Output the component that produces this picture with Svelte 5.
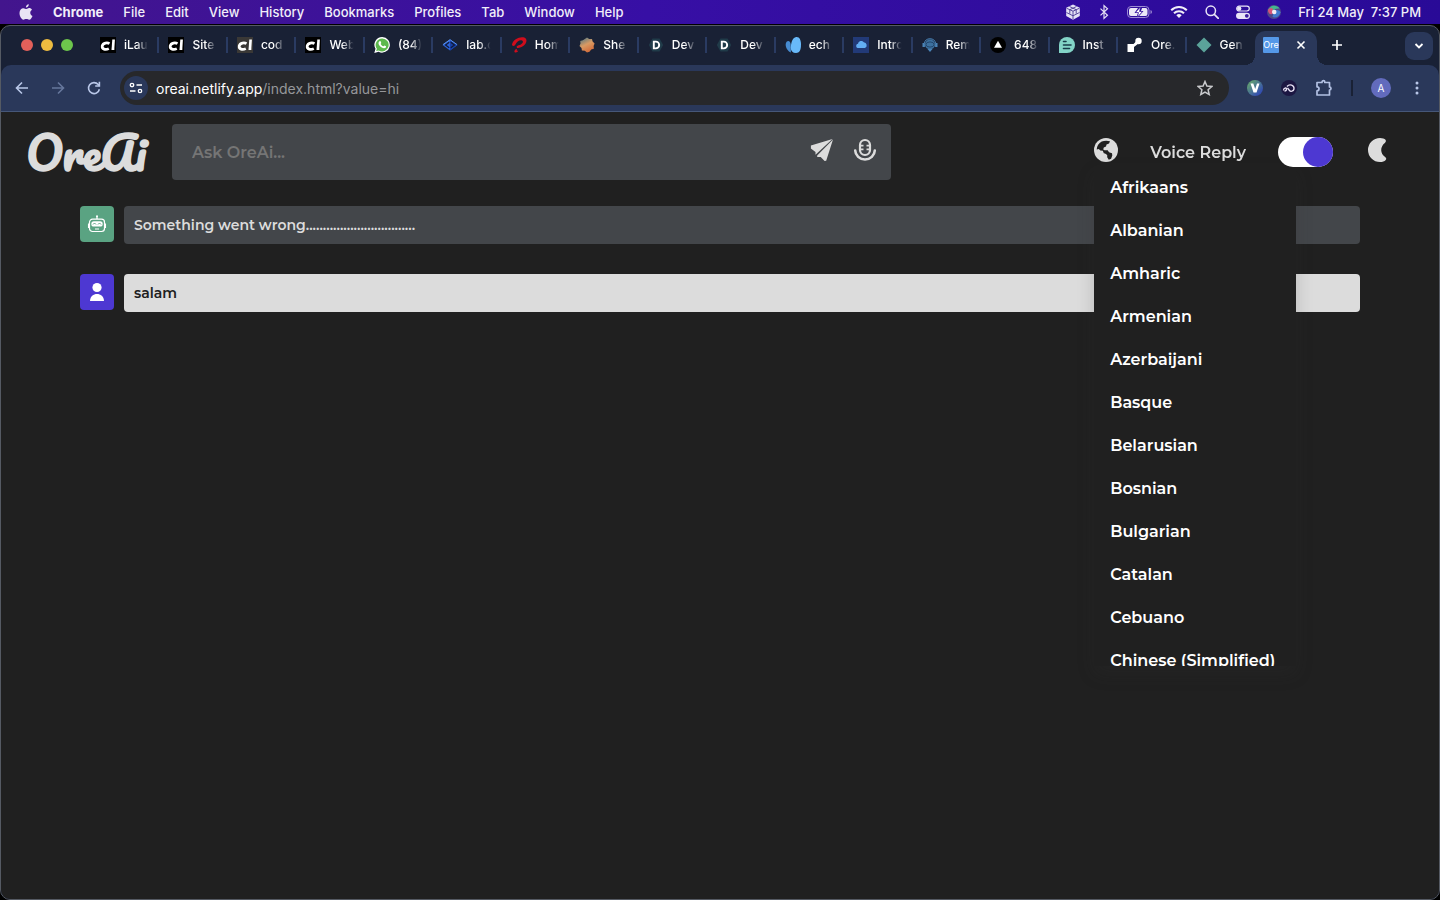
<script>
  const menus = ['File', 'Edit', 'View', 'History', 'Bookmarks', 'Profiles', 'Tab', 'Window', 'Help'];

  const tabs = [
    { icon: 'cl', title: 'iLau' },
    { icon: 'cl', title: 'Site' },
    { icon: 'cl-dim', title: 'cod' },
    { icon: 'cl', title: 'Web' },
    { icon: 'whatsapp', title: '(84)' },
    { icon: 'lab', title: 'lab.c' },
    { icon: 'airtel', title: 'Hom' },
    { icon: 'badge', title: 'She' },
    { icon: 'devfolio', title: 'Dev' },
    { icon: 'devfolio', title: 'Dev' },
    { icon: 'echo', title: 'ech' },
    { icon: 'cloud', title: 'Intro' },
    { icon: 'remote', title: 'Rem' },
    { icon: 'triangle', title: '648' },
    { icon: 'chat', title: 'Inst' },
    { icon: 'node', title: 'Ore.' },
    { icon: 'diamond', title: 'Gen' },
  ];

  const languages = [
    'Afrikaans', 'Albanian', 'Amharic', 'Armenian', 'Azerbaijani', 'Basque', 'Belarusian',
    'Bosnian', 'Bulgarian', 'Catalan', 'Cebuano', 'Chinese (Simplified)', 'Chinese (Traditional)',
    'Corsican', 'Croatian', 'Czech', 'Danish', 'Dutch', 'English',
  ];

  const messages = [
    { from: 'bot', text: 'Something went wrong................................' },
    { from: 'user', text: 'salam' },
  ];

  let prompt = $state('');
  let voiceReply = $state(true);
  let showLanguages = $state(true);
  let language = $state('English');

  function pickLanguage(name) {
    language = name;
    showLanguages = false;
  }
</script>

{#snippet favicon(name)}
  <svg class="favicon" viewBox="0 0 16 16" aria-hidden="true">
    {#if name === 'cl' || name === 'cl-dim'}
      <rect width="16" height="16" fill={name === 'cl' ? '#000' : '#3a3836'} />
      <path d="M9.500 6.600C7.500 5.400 3 5.600 2.200 8.900 1.700 12.300 5.500 13.200 8.800 11.600" fill="none" stroke="#fff" stroke-width="2.700" />
      <path d="M12.300 2.600h2.600L14.300 13h-2.800z" fill="#fff" />
    {:else if name === 'whatsapp'}
      <path d="M8.2 0a7.8 7.8 0 1 1-3.6 14.8L.3 16l1.2-4.2A7.8 7.8 0 0 1 8.2 0z" fill="#fff" />
      <path d="M8.2 1.4a6.5 6.5 0 1 1-3.5 12l-2.5.7.7-2.4A6.5 6.5 0 0 1 8.2 1.4z" fill="#5cb84c" />
      <path d="M5.6 4.3c.7-.5 1.1-.1 1.6 1.4.2.6-.6.8-.5 1.2.6 1.3 1.5 2 2.6 2.4.5 0 .7-1 1.2-.9l1.5.8c.5 1-.8 2-1.9 2C7 11 4.5 8.200 4.5 6.3c0-.8.5-1.6 1.1-2z" fill="#fff" />
    {:else if name === 'lab'}
      <path d="M8 2.500 15.500 8 8 13.500.5 8z" fill="#2c62d8" />
      <path d="M8 2.500v11L15.500 8z" fill="#173fa5" />
      <path d="M7.200 5.200 3.600 8l3.600 2.800M8.800 5.200 12.400 8l-3.600 2.800" fill="none" stroke="#101b38" stroke-width="1.3" />
      <path d="M1 7.600 8 2.700l7 4.900" fill="none" stroke="#5b94ee" />
    {:else if name === 'airtel'}
      <path d="M1 7.500C2 2.500 8-.5 12.500.3c4.500 1 3.800 6.500-1.500 9.500-2.800 1.500-5.200 1.300-5.400.2-.1-1.200 1.600-1.500 3-2 2.600-1 4.600-3.600 2.400-4.500C8.500 2.700 6 4.500 4 8.200 2.500 9.500 1 9 1 7.500z" fill="#cf0d1c" />
      <path d="M6.500 11.800c-1.500 1-.8 2.600 1 1.800-.8 1.800-3.200 2.700-4 1.300-.6-1.400 1.200-3 3-3.100z" fill="#cf0d1c" />
    {:else if name === 'badge'}
      <defs>
        <linearGradient id="badge" x1="0" y1="0" x2=".5" y2="1">
          <stop offset="0" stop-color="#3e7287" />
          <stop offset=".55" stop-color="#d89a63" />
          <stop offset="1" stop-color="#d36e3c" />
        </linearGradient>
      </defs>
      <path d="m8 .5 2.200 1.600L13 2l.6 2.600L15.600 6.600l-1 2.400.3 2.700-2.700.7L10.500 14.700 8 15.500l-2.200-1.800-2.900-.1-.4-2.700L.5 9l1-2.400-.3-2.700 2.700-.6z" fill="url(#badge)" />
    {:else if name === 'devfolio'}
      <path d="M4.500 1.500h7L15.200 8l-3.700 6.500h-7L.8 8z" fill="#203b49" />
      <path d="M5.800 4.600h2a3.400 3.400 0 0 1 0 6.800h-2z" fill="none" stroke="#fff" stroke-width="1.900" />
    {:else if name === 'echo'}
      <path d="M1.800 4.500c2-1.500 4 .4 3.900 3.500l.2 7.500C1.500 13.500-.9 7.500 1.800 4.500z" fill="#468bd1" />
      <path d="M10.500.2c4-.9 5.500 3 5.500 7.300 0 5.700-1.600 8.500-5 8.500-3.500 0-5.300-2-5.200-5.500C6 6 7.300 1 10.500.2z" fill="#68b9fa" />
    {:else if name === 'cloud'}
      <rect width="16" height="16" fill="#223a78" />
      <path d="M4.500 11A2.200 2.200 0 0 1 5 6.800a3.200 3.200 0 0 1 5.800-1.500 3 3 0 0 1 1.200 5.700z" fill="#62aef4" />
    {:else if name === 'remote'}
      <circle cx="8" cy="7.5" r="5" fill="#3d719f" />
      <path d="M2.300 10V6.500a5.800 5.800 0 0 1 11.400 0V10" fill="none" stroke="#4a84b8" />
      <path d="M.5 6h2v4h-2zM13.500 6h2v4h-2zM5.500 12h5L8 15z" fill="#4a84b8" />
      <ellipse cx="8" cy="7.5" rx="4" ry="2.6" fill="none" stroke="#22466d" />
    {:else if name === 'triangle'}
      <circle cx="8" cy="8" r="8" fill="#000" />
      <path d="m8 3.800 4 7H4z" fill="#fff" />
    {:else if name === 'chat'}
      <path d="M8 0a8 8 0 0 1 0 16H0V8a8 8 0 0 1 8-8z" fill="#83d4c7" />
      <path d="M4.500 4.500h2.500M4.500 8h7.500M4.500 11.500h6" stroke="#183b4a" stroke-width="1.600" stroke-linecap="round" />
    {:else if name === 'node'}
      <path d="M.5 7h6l3-3 2.200 2.200L7 10v5H.5z" fill="#fff" />
      <circle cx="11.5" cy="4" r="3.2" fill="#fff" />
    {:else if name === 'diamond'}
      <path d="m8 .5 7.500 7.500L8 15.500.5 8z" fill="#5ba39a" />
    {/if}
  </svg>
{/snippet}

<div class="desktop">
  <!-- System menu bar -->
  <header class="menubar">
    <nav class="menus" aria-label="Menu bar">
      <button class="apple" aria-label="Apple menu">
        <svg width="14" height="16" viewBox="0 0 14 16"><path d="M9.800.2c.1 1.700-1.200 3.300-2.900 3.300C6.700 1.900 8.200.4 9.800.2zM10 4.100c1.300 0 2.400.7 3 1.600-2.600 1.500-2.100 5.200.5 6.200-.7 1.800-1.800 3.800-3.300 3.800-1.100 0-1.500-.7-2.900-.7s-1.900.7-2.900.7C2.600 15.700.5 12.300.5 9.100c0-3.100 1.900-4.900 3.900-4.900 1.300 0 2.100.8 3.100.8.8 0 1.500-.9 2.500-.9z" /></svg>
      </button>
      <button class="app-name">Chrome</button>
      {#each menus as menu}
        <button>{menu}</button>
      {/each}
    </nav>
    <div class="status">
      <svg width="16" height="16" viewBox="0 0 16 16"><path d="m8 .5 6.800 3.300v8.300L8 15.700l-6.800-3.600V3.800z" fill="#e4e2f6" /><path d="m1.500 4.200 6.500 3 6.500-3M8 7.200v8M4.500 2.500l6.700 3.200v4M11.500 2.500 4.800 5.700v4M1.500 8.500l6.500 3.300 6.500-3.300" fill="none" stroke="#4a3b94" stroke-width=".9" /></svg>
      <svg width="12" height="16" viewBox="0 0 12 16"><path d="m2.500 4.600 7 6.700L6 14.500v-13l3.500 3.200-7 6.700" fill="none" stroke="#e4e0f4" stroke-width="1.200" /></svg>
      <svg width="26" height="14" viewBox="0 0 26 14"><rect x=".5" y="1.5" width="21.5" height="11" rx="3.500" fill="none" stroke="#9b8ad2" /><path d="M4 3h7L7.500 8H11l-1 3H4a2 2 0 0 1-2-2V5a2 2 0 0 1 2-2zM15 3h3.500a2 2 0 0 1 2 2v4a2 2 0 0 1-2 2H12l4.500-5H14z" fill="#ece9f7" /><path d="m13.500 2-5 5.500h3l-1 4.500 5-5.500h-3z" fill="#fff" stroke="#3a1b9e" stroke-width=".6" /><path d="M23.500 5v4c2-.8 2-3.200 0-4z" fill="#9b8ad2" /></svg>
      <svg width="18" height="14" viewBox="0 0 18 14"><path d="M1.200 5.300a11 11 0 0 1 15.600 0M4 8.200a7.100 7.100 0 0 1 10 0" fill="none" stroke="#f1eff9" stroke-width="2" /><path d="M6.300 10.300a4 4 0 0 1 5.400 0L9 13z" fill="#f1eff9" /></svg>
      <svg width="14" height="14" viewBox="0 0 14 14"><circle cx="5.800" cy="5.800" r="4.700" fill="none" stroke="#e9e5f7" stroke-width="1.500" /><path d="m9.300 9.300 4 4" stroke="#e9e5f7" stroke-width="1.700" stroke-linecap="round" /></svg>
      <svg width="14" height="14" viewBox="0 0 14 14"><rect x=".7" y="1.200" width="12.600" height="4.800" rx="2.400" fill="none" stroke="#e9e5f7" stroke-width="1.200" /><circle cx="3.200" cy="3.600" r="2.200" fill="#e9e5f7" /><rect y="7.700" width="14" height="6.200" rx="3.100" fill="#e9e5f7" /><circle cx="10.800" cy="10.800" r="1.900" fill="#3a1b9e" /></svg>
      <svg width="14" height="14" viewBox="0 0 14 14"><circle cx="7" cy="7" r="7" fill="#4e4789" /><path d="M1 5C3 0 10-.5 12.500 3.500 9 3 6 5 5 7z" fill="#43b58f" /><path d="M1 5c1-2 4-3 5-1L5 9c-2 1-4-1-4-4z" fill="#d65279" /><path d="M7 6c2-2 6-1 6.500 1.500-1 4-5 6-8 4.500z" fill="#3f78cf" /><circle cx="7.200" cy="7" r="2.300" fill="#f4e9f3" /></svg>
      <time class="clock">Fri 24 May&nbsp; 7:37 PM</time>
    </div>
  </header>

  <div class="window">
    <!-- Tab strip -->
    <div class="tabstrip">
      <div class="lights">
        <button class="light close" aria-label="Close window"></button>
        <button class="light minimise" aria-label="Minimise window"></button>
        <button class="light zoom" aria-label="Zoom window"></button>
      </div>
      <div class="tabs">
        {#each tabs as tab, i}
          <button class="tab" class:last={i === tabs.length - 1}>
            {@render favicon(tab.icon)}
            <span class="tab-title">{tab.title}</span>
          </button>
        {/each}
      </div>
      <div class="active-tab">
        <span class="ore-icon">Ore</span>
        <button class="tab-close" aria-label="Close tab">
          <svg width="10" height="10" viewBox="0 0 10 10"><path d="m1.500 1.500 7 7m0-7-7 7" stroke="#fff" stroke-width="1.600" /></svg>
        </button>
      </div>
      <button class="new-tab" aria-label="New tab">
        <svg width="12" height="12" viewBox="0 0 12 12"><path d="M6 1v10M1 6h10" stroke="#fff" stroke-width="1.700" /></svg>
      </button>
      <button class="tab-search" aria-label="Search tabs">
        <svg width="10" height="8" viewBox="0 0 10 8"><path d="m1.500 2 3.500 3.500L8.500 2" fill="none" stroke="#fff" stroke-width="1.800" /></svg>
      </button>
    </div>

    <!-- Address bar -->
    <div class="toolbar">
      <button aria-label="Back"><svg width="16" height="16" viewBox="0 0 16 16"><path d="M14 8H3M8 2.500 2.500 8 8 13.500" fill="none" stroke="#b9c7e8" stroke-width="1.600" /></svg></button>
      <button aria-label="Forward"><svg width="16" height="16" viewBox="0 0 16 16"><path d="M2 8h11M8 2.500 13.500 8 8 13.500" fill="none" stroke="#66779c" stroke-width="1.600" /></svg></button>
      <button aria-label="Reload"><svg width="16" height="16" viewBox="0 0 16 16"><path d="M13.400 9.300A5.500 5.500 0 1 1 12.200 4.500L13.500 6" fill="none" stroke="#b9c7e8" stroke-width="1.600" /><path d="M14.200 1.800v5h-5V5.200h3.400V1.800z" fill="#b9c7e8" /></svg></button>
      <div class="omnibox">
        <button class="site-info" aria-label="View site information">
          <svg width="14" height="12" viewBox="0 0 14 12"><path d="M7.500 3H13M1 9h5.500" stroke="#fff" stroke-width="1.500" /><circle cx="3" cy="3" r="1.700" fill="none" stroke="#fff" stroke-width="1.300" /><circle cx="11" cy="9" r="1.700" fill="none" stroke="#fff" stroke-width="1.300" /></svg>
        </button>
        <div class="url" role="textbox" tabindex="0" aria-label="Address">oreai.netlify.app<span>/index.html?value=hi</span></div>
        <button aria-label="Bookmark this tab"><svg width="16" height="16" viewBox="0 0 16 16"><path d="m8 1.500 1.900 4.600 4.900.4-3.700 3.200 1.100 4.800L8 12l-4.200 2.500 1.100-4.800L1.200 6.500l4.900-.4z" fill="none" stroke="#c8c9cc" stroke-width="1.500" /></svg></button>
      </div>
      <div class="extensions">
        <button aria-label="Vimium"><svg width="16" height="16" viewBox="0 0 16 16"><defs><linearGradient id="vee" x2="1" y2="1"><stop offset=".2" stop-color="#5f9a76" /><stop offset=".8" stop-color="#344fb0" /></linearGradient></defs><circle cx="8" cy="8" r="8" fill="url(#vee)" /><path d="M3.500 3.500h2.800L8.200 9l1.800-5.500h2.500L9.500 12.500h-3z" fill="#fff" /></svg></button>
        <button aria-label="Assistant"><svg width="16" height="16" viewBox="0 0 16 16"><circle cx="8" cy="8" r="8" fill="#1c1742" /><path d="M2.500 10.500C2.500 7.500 5.500 7.500 5.500 9S4 11 3.500 11M6 6.500C8.500 3.500 13.500 5 13 9c-.5 2.500-3.500 2.800-4.500 1.500L6.500 8" fill="none" stroke="#e8e2f5" stroke-width="1.300" /></svg></button>
        <button aria-label="Extensions"><svg width="18" height="18" viewBox="0 0 18 18"><path d="M2 3.500h5V3a1.400 1.400 0 0 1 2.800 0v.5h4.700V8a1.500 1.500 0 0 1 0 3v5H2v-4.200a2 2 0 0 0 0-4z" fill="none" stroke="#b3c1e3" stroke-width="1.700" stroke-linejoin="round" /></svg></button>
        <span class="divider"></span>
        <button class="avatar" aria-label="Profile">A</button>
        <button aria-label="Chrome menu"><svg width="16" height="16" viewBox="0 0 16 16" fill="#b9c7e8"><circle cx="8" cy="3" r="1.500" /><circle cx="8" cy="8" r="1.500" /><circle cx="8" cy="13" r="1.500" /></svg></button>
      </div>
    </div>

    <!-- OreAi page -->
    <div class="page">
      <header class="page-header">
        <a class="logo" href="/">OreAi</a>
        <form class="ask" onsubmit={(e) => e.preventDefault()}>
          <input type="text" aria-label="Ask OreAi" placeholder="Ask OreAi..." bind:value={prompt} />
          <button type="submit" aria-label="Send">
            <svg width="24" height="24" viewBox="0 0 24 24" fill="#dcdcdc"><path d="M22.500 1 .9 7.500v3L5.500 14v2.800zM23 1.500 7.200 17.500v1.400h3.500l3.900 4.100 1.600-.2z" /></svg>
          </button>
          <button type="button" aria-label="Speak">
            <svg width="24" height="24" viewBox="0 0 24 24" fill="none" stroke="#dcdcdc"><rect x="7" y="2" width="10" height="15" rx="5" stroke-width="2.200" /><path d="M2.200 12.500c.2 5 4.500 9 9.800 9s9.600-4 9.800-9" stroke-width="2.600" stroke-linecap="round" /><path d="M7 7.700h3.500M13.500 7.700H17M7 11.300h3.500M13.500 11.300H17" stroke-width="1.800" /></svg>
          </button>
        </form>

        <div class="controls">
          <div class="languages">
            <button class="globe" aria-label="Language" aria-expanded={showLanguages} onclick={() => (showLanguages = !showLanguages)}>
              <svg width="24" height="24" viewBox="0 0 24 24"><circle cx="12" cy="12" r="12" fill="#dcdcdc" /><path d="M2.700 11.500c.2-3.500 2-6.500 5-8 2.500-1 5.500-1.100 8.300-.3L15 5.500 12.500 6.500 12 8.500 9.800 9.500l-.6 2 1.300.8h3.200l1.300 2 3 1 .3 2.200-1.200 3.300-2.300 1-1.600-2.500V17l-2.200-1.500-1.200-.2-1-2.600-2.500-.2-1.500-1.500z" fill="#202020" /></svg>
            </button>
            {#if showLanguages}
              <ul class="language-list">
                {#each languages as name}
                  <li><button aria-current={name === language} onclick={() => pickLanguage(name)}>{name}</button></li>
                {/each}
              </ul>
            {/if}
          </div>
          <label class="voice">
            <span>Voice Reply</span>
            <input type="checkbox" bind:checked={voiceReply} />
          </label>
          <button class="theme" aria-label="Toggle theme">
            <svg width="19" height="24" viewBox="0 0 19 24"><path d="M12 0c2.500 0 4.500.8 5.500 1.700.9 1.200.2 2.300-.7 3.200-5 4-4.600 10.500.3 14 1.300.8 1.500 2 .6 3C16.500 23.300 14.500 24 12 24a12 12 0 0 1 0-24z" fill="#dcdcdc" /></svg>
          </button>
        </div>
      </header>

      <main class="messages">
        {#each messages as message}
          <div class="message {message.from}">
            <span class="sender">
              {#if message.from === 'bot'}
                <svg width="20" height="20" viewBox="0 0 20 20" fill="none" stroke="#fff"><path d="M10 5V2" stroke-width="1.300" /><circle cx="10" cy="2.200" r="1" fill="#fff" stroke="none" /><path d="M5.500 5.200h9a3 3 0 0 1 3 3v6.300a3 3 0 0 1-3 3h-9a3 3 0 0 1-3-3V8.200a3 3 0 0 1 3-3z" stroke-width="1.200" /><path d="M1.600 9.500v4.500M18.400 9.500v4.500" stroke-width="1.300" /><rect x="4.300" y="7.300" width="11.400" height="5.300" rx="2.600" fill="#fff" stroke="none" /><path d="m6 10.500 1.500-1.500L9 10.500m2 0L12.500 9l1.500 1.500" stroke="#5aa382" /><path d="M8 15h4" stroke-width="1.200" /></svg>
              {:else}
                <svg width="20" height="20" viewBox="0 0 20 20" fill="#fff"><circle cx="10" cy="5.500" r="4.600" /><path d="M3 19c0-9.500 14-9.500 14 0z" /></svg>
              {/if}
            </span>
            <p class="bubble">{message.text}</p>
          </div>
        {/each}
      </main>
    </div>
  </div>
</div>

<style>
  :global(body) {
    margin: 0;
    background: #000;
  }

  .desktop {
    display: flex;
    flex-direction: column;
    min-height: 100vh;
    font-family: Inter, 'Liberation Sans', sans-serif;
    color: #fff;
  }
  button {
    display: flex;
    align-items: center;
    justify-content: center;
    padding: 0;
    border: none;
    background: none;
    color: inherit;
    font: inherit;
    cursor: pointer;
  }
  svg {
    display: block;
    flex-shrink: 0;
  }

  /* === Menu bar === */
  .menubar {
    display: flex;
    align-items: center;
    justify-content: space-between;
    height: 24px;
    margin-bottom: 1px;
    padding: 0 19px;
    background: linear-gradient(90deg, #43158d, #370fa5 45%, #290a97);
    font-size: 13px;
    font-weight: 500;
    color: #f1eef9;
  }
  .menus,
  .status {
    display: flex;
    align-items: center;
  }
  .menus {
    gap: 20px;
  }
  .status {
    gap: 17px;
  }
  .apple {
    fill: #e9e4f4;
  }
  .app-name {
    font-weight: 700;
  }

  /* === Browser window === */
  .window {
    flex: 1;
    display: flex;
    flex-direction: column;
    border: 1px solid #555a63;
    border-radius: 10px;
    background: #192135;
    overflow: hidden;
  }
  .tabstrip {
    display: flex;
    align-items: center;
    height: 39px;
    padding-right: 6px;
  }
  .lights {
    display: flex;
    gap: 8px;
    padding: 0 18px 2px 20px;
  }
  .light {
    width: 12px;
    height: 12px;
    border-radius: 50%;
  }
  .close {
    background: #e2605a;
  }
  .minimise {
    background: #edbb40;
  }
  .zoom {
    background: #6dc54c;
  }
  .tabs {
    flex: 1;
    display: flex;
    min-width: 0;
  }
  .tab {
    flex: 1;
    position: relative;
    justify-content: flex-start;
    gap: 8px;
    min-width: 0;
    padding: 0 10px 2px 9px;
    font-size: 12px;
    font-weight: 500;
  }
  .tab::after {
    content: '';
    position: absolute;
    right: 0;
    width: 2px;
    height: 16px;
    background: #2a3b62;
  }
  .tab.last::after {
    display: none;
  }
  .favicon {
    width: 16px;
    height: 16px;
  }
  .tab-title {
    flex: 1;
    overflow: hidden;
    white-space: nowrap;
    text-align: left;
    mask-image: linear-gradient(90deg, #000 50%, transparent 95%);
  }
  .active-tab {
    position: relative;
    align-self: flex-end;
    display: flex;
    align-items: center;
    justify-content: space-between;
    box-sizing: border-box;
    width: 62px;
    height: 34px;
    padding: 0 11px 6px 8px;
    border-radius: 10px 10px 0 0;
    background: #2a385a;
  }
  .active-tab::before,
  .active-tab::after {
    content: '';
    position: absolute;
    bottom: 0;
    width: 10px;
    height: 10px;
  }
  .active-tab::before {
    right: 100%;
    background: radial-gradient(circle at 0 0, transparent 10px, #2a385a 10px);
  }
  .active-tab::after {
    left: 100%;
    background: radial-gradient(circle at 100% 0, transparent 10px, #2a385a 10px);
  }
  .ore-icon {
    display: flex;
    justify-content: center;
    width: 16px;
    overflow: hidden;
    border-radius: 1px;
    background: #5598e8;
    font-size: 9px;
    line-height: 16px;
  }
  .new-tab {
    width: 40px;
    padding-bottom: 2px;
  }
  .tab-search {
    width: 28px;
    height: 28px;
    margin-left: 48px;
    border-radius: 9px;
    background: #2a385a;
  }

  .toolbar {
    display: flex;
    align-items: center;
    gap: 20px;
    height: 46px;
    padding: 0 14px 0 13px;
    border-bottom: 1px solid #465778;
    border-radius: 10px 10px 0 0;
    background: #2a385a;
  }
  .omnibox {
    flex: 1;
    display: flex;
    align-items: center;
    gap: 8px;
    height: 34px;
    margin: 0 -2px;
    padding: 0 16px 0 4px;
    border-radius: 17px;
    background: #27282b;
  }
  .site-info {
    width: 24px;
    height: 24px;
    border-radius: 50%;
    background: #2a385a;
  }
  .url {
    flex: 1;
    outline: none;
    font-size: 14px;
  }
  .url span {
    color: #96979a;
  }
  .extensions {
    display: flex;
    align-items: center;
    gap: 18px;
  }
  .divider {
    width: 2px;
    height: 16px;
    background: #192135;
  }
  .avatar {
    width: 20px;
    height: 20px;
    border-radius: 50%;
    background: #626bbd;
    font-size: 10px;
  }

  /* === Page === */
  .page {
    flex: 1;
    background: #202020;
    color: #dcdcdc;
    font-family: Montserrat, Inter, sans-serif;
  }
  .page-header {
    display: flex;
    align-items: center;
    padding: 12px 52px 12px 25px;
  }
  .logo {
    width: 146px;
    font-family: Pacifico, Lato, sans-serif;
    font-size: 45px;
    font-weight: 700;
    line-height: 56px;
    color: #dcdcdc;
    text-decoration: none;
  }
  .ask {
    display: flex;
    align-items: center;
    gap: 19px;
    box-sizing: border-box;
    width: calc(50vw - 1px);
    height: 56px;
    padding: 0 14px 0 20px;
    border-radius: 4px;
    background: #43464a;
  }
  .ask input {
    flex: 1;
    min-width: 0;
    padding: 0;
    border: none;
    outline: none;
    background: none;
    color: #dcdcdc;
    font: inherit;
    font-size: 16px;
    font-weight: 600;
  }
  .ask input::placeholder {
    color: #757575;
  }
  .ask button {
    padding-bottom: 4px;
  }
  .controls {
    display: flex;
    align-items: center;
    margin-left: auto;
  }
  .languages {
    position: relative;
    margin-right: 32px;
  }
  .globe,
  .theme {
    padding-bottom: 4px;
  }
  .language-list {
    position: absolute;
    z-index: 1;
    top: 28px;
    left: 0;
    width: 202px;
    max-height: 500px;
    margin: 0;
    padding: 0;
    overflow: auto;
    scrollbar-width: none;
    list-style: none;
    background: #202020;
    box-shadow: 0 8px 16px rgba(50, 50, 50, 0.2);
  }
  .language-list button {
    justify-content: flex-start;
    width: 100%;
    height: 43px;
    padding: 0 16px;
    color: #fff;
    font-size: 16px;
    font-weight: 600;
  }
  .voice {
    position: relative;
    z-index: 2;
    display: flex;
    align-items: center;
    gap: 32px;
    font-size: 16px;
    font-weight: 600;
  }
  .voice input {
    appearance: none;
    display: flex;
    width: 55px;
    height: 30px;
    margin: 0;
    border-radius: 15px;
    background: #fff;
  }
  .voice input::before {
    content: '';
    width: 30px;
    height: 30px;
    border-radius: 50%;
    background: #4d38d2;
  }
  .voice input:checked {
    justify-content: flex-end;
  }
  .theme {
    margin-left: 35px;
  }

  .messages {
    display: flex;
    flex-direction: column;
    gap: 30px;
    padding: 14px 79px;
  }
  .message {
    display: flex;
    align-items: flex-start;
    gap: 10px;
  }
  .sender {
    display: flex;
    align-items: center;
    justify-content: center;
    width: 34px;
    height: 36px;
    border-radius: 4px;
  }
  .bot .sender {
    background: #5aa382;
  }
  .user .sender {
    background: #4d38d2;
  }
  .bubble {
    flex: 1;
    margin: 0;
    padding: 10px;
    border-radius: 4px;
    font-size: 14px;
    font-weight: 600;
    line-height: 18px;
  }
  .bot .bubble {
    background: #43464a;
  }
  .user .bubble {
    background: #dcdcdc;
    color: #202020;
  }
</style>
